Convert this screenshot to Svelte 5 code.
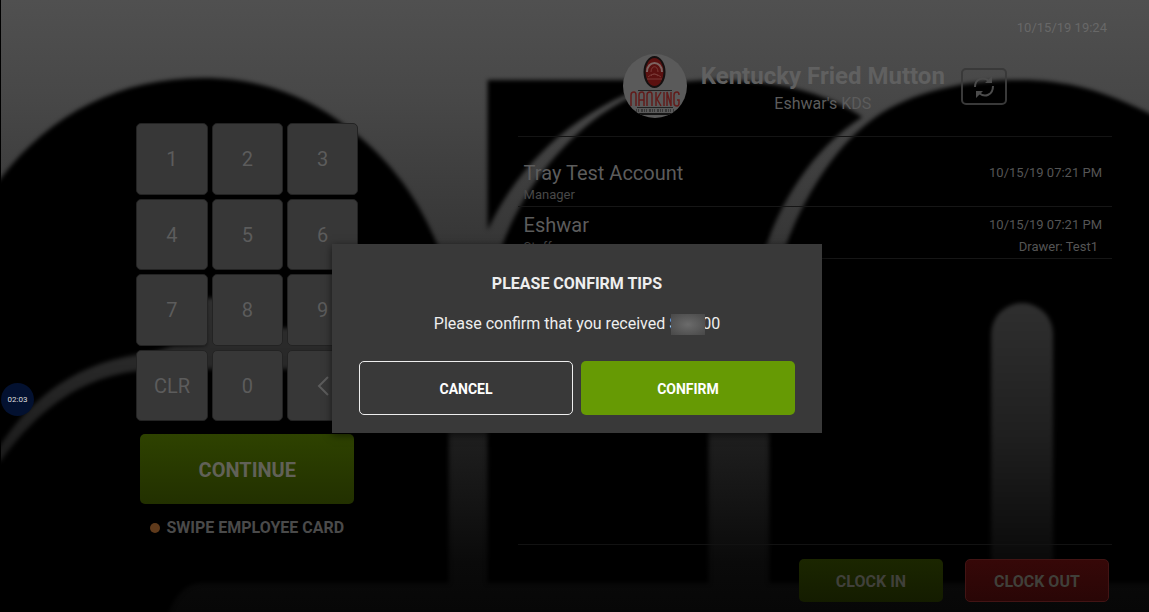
<script lang="ts">
  type Shift = {
    name: string;
    role: string;
    time: string;
    drawer?: string;
  };

  const keys = ["1", "2", "3", "4", "5", "6", "7", "8", "9", "CLR", "0", "<"];

  const shifts: Shift[] = [
    { name: "Tray Test Account", role: "Manager", time: "10/15/19 07:21 PM" },
    { name: "Eshwar", role: "Staff", time: "10/15/19 07:21 PM", drawer: "Drawer: Test1" },
  ];

  let pin = $state("");
  let confirming = $state(true);

  const press = (key: string) => {
    if (key === "CLR") pin = "";
    else if (key === "<") pin = pin.slice(0, -1);
    else pin += key;
  };
</script>

<svelte:head>
  <title>Time Clock</title>
</svelte:head>

<div class="screen">
  <svg class="backdrop" viewBox="0 0 1149 612" preserveAspectRatio="none" aria-hidden="true">
    <defs>
      <linearGradient id="fade" gradientUnits="userSpaceOnUse" x1="0" y1="0" x2="0" y2="612">
        <stop offset="0" stop-color="#505050" />
        <stop offset="0.15" stop-color="#484848" />
        <stop offset="0.4" stop-color="#363636" />
        <stop offset="0.7" stop-color="#202020" />
        <stop offset="0.92" stop-color="#0a0a0a" />
        <stop offset="1" stop-color="#070707" />
      </linearGradient>
      <filter id="soft" x="-5%" y="-5%" width="110%" height="110%" color-interpolation-filters="sRGB">
        <feGaussianBlur stdDeviation="2" />
      </filter>
    </defs>
    <rect width="1149" height="612" fill="url(#fade)" />
    <g filter="url(#soft)">
      <path d="M-20 200 L0 178 C50 113 120 78 202 78 C256 78 300 94 337 120 C384 153 415 193 436 243 C445 270 448 300 448 330 V583 H200 Q174 585 164 625 H-20Z" />
      <path d="M487 80 H665 C580 105 520 160 487 230Z" />
      <path d="M487 583 V310 C495 225 545 155 600 115 C640 88 670 80 715 80 C775 80 825 92 862 117 C810 150 780 205 767 243 C740 290 708 340 708 400 V583Z" />
      <path d="M769 583 V320 C775 270 787 240 797 218 C820 170 850 130 890 108 C930 87 975 80 1020 80 C1070 80 1110 92 1170 124 V583Z" />
      <path fill="url(#fade)" d="M-10 460 C25 400 75 360 150 353 L172 346 L205 345 V298 H215 V328 H335 V369 H170 C90 367 40 405 0 461Z" />
      <path fill="url(#fade)" d="M991 583 V334 A31 31 0 0 1 1053 334 V583Z" />
    </g>
  </svg>

  <section class="entry">
    <div class="keypad">
      {#each keys as key}
        <button class="key" aria-label={key === "<" ? "Backspace" : key} onclick={() => press(key)}>
          {#if key === "<"}
            <svg width="12" height="20" viewBox="0 0 12 20"><path d="M11 1 L2 10 L11 19" fill="none" stroke="currentColor" stroke-width="2" /></svg>
          {:else}
            {key}
          {/if}
        </button>
      {/each}
    </div>
    <button class="continue">CONTINUE</button>
    <p class="swipe"><span class="dot"></span>SWIPE EMPLOYEE CARD</p>
  </section>

  <section class="panel">
    <time class="now">10/15/19 19:24</time>

    <header>
      <svg class="logo" viewBox="0 0 64 64" role="img" aria-label="Nanking">
        <defs>
          <clipPath id="round"><circle cx="32" cy="32" r="32" /></clipPath>
        </defs>
        <g clip-path="url(#round)">
          <rect width="64" height="64" fill="#5a5a5a" />
          <ellipse cx="31.500" cy="18" rx="11" ry="16" fill="#151010" />
          <ellipse cx="31.500" cy="18" rx="9" ry="14" fill="#5b1110" />
          <path d="M24 18 C24 6 39 6 39 18" fill="none" stroke="#7d6562" stroke-width="2" />
          <path d="M28 18 C28 11 35 11 35 18 M25 23 Q31 17 38 23 M24 25 H39 M28 22 Q31 18 35 22" fill="none" stroke="#7a3a37" />
          <path d="M15 36.500 H49 M14 53.500 H50" stroke="#222" stroke-width="1" />
          <path d="M8 52 V41 Q8 38 11 38 Q13 38 13 41 V52 M16 52 V41 Q16 38 19 38 Q21 38 21 41 V52 M16 46 H21 M24 52 V41 Q24 38 27 38 Q29 38 29 41 V52 M33 38 V52 M38 38 L34 45 L38 52 M41 38 V52 M44 52 V38 L48 52 V38 M56 41 Q56 38 54 38 Q51 38 51 41 V49 Q51 52 54 52 Q56 52 56 49 V46 H54" fill="none" stroke="#621c1b" stroke-width="1.500" />
          <path d="M13 56.500 H51" stroke="#383838" stroke-width="3" stroke-dasharray="1 1 1 2 2 1" />
          <path d="M8 60 H56" stroke="#151515" stroke-width="2" />
        </g>
      </svg>
      <div class="store">
        <h1>Kentucky Fried Mutton</h1>
        <p>Eshwar's KDS</p>
      </div>
      <button class="refresh" aria-label="Refresh">
        <svg width="22" height="24" viewBox="0 0 22 24" fill="none" stroke="currentColor" stroke-width="2">
          <path d="M2 12 C2 4 10 1 16 6 M20 11 C20 20 12 23 6 18" />
          <path d="M19 1 V8 H12Z M3 23 V16 H10Z" fill="currentColor" stroke="none" />
        </svg>
      </button>
    </header>

    <ul>
      {#each shifts as shift}
        <li>
          <div>
            <strong>{shift.name}</strong>
            <small>{shift.role}</small>
          </div>
          <div class="when">
            <time>{shift.time}</time>
            {#if shift.drawer}<span>{shift.drawer}</span>{/if}
          </div>
        </li>
      {/each}
    </ul>

    <footer>
      <button class="clock in">CLOCK IN</button>
      <button class="clock out">CLOCK OUT</button>
    </footer>
  </section>

  <div class="timer">02:03</div>

  {#if confirming}
    <div class="overlay">
      <div class="dialog" role="dialog" aria-modal="true" aria-labelledby="dialog-title">
        <h2 id="dialog-title">PLEASE CONFIRM TIPS</h2>
        <p>Please confirm that you received $<span class="hidden-amount"></span>00</p>
        <div class="actions">
          <button class="cancel" onclick={() => (confirming = false)}>CANCEL</button>
          <button class="confirm" onclick={() => (confirming = false)}>CONFIRM</button>
        </div>
      </div>
    </div>
  {/if}
</div>

<style>
  :global(body) {
    margin: 0;
    background: #000;
  }

  .screen {
    position: relative;
    display: grid;
    grid-template-columns: 45fr 55fr;
    min-height: 100vh;
    box-sizing: border-box;
    border-left: 1px solid #000;
    overflow: hidden;
    font-family: Roboto, "Liberation Sans", sans-serif;
    color: #5c5c5c;
  }

  .backdrop {
    position: absolute;
    inset: 0;
    width: 100%;
    height: 100%;
  }

  h1,
  h2,
  p,
  ul {
    margin: 0;
    padding: 0;
  }

  button {
    box-sizing: border-box;
    padding: 1px 0 0;
    border: 0;
    border-radius: 5px;
    font: inherit;
    color: inherit;
    cursor: pointer;
  }

  .entry {
    position: relative;
    display: flex;
    flex-direction: column;
    align-items: center;
    padding: 123px 24px 0 0;
  }

  .keypad {
    display: grid;
    grid-template-columns: repeat(3, 1fr);
    grid-template-rows: repeat(4, 1fr);
    gap: 4px;
    width: 222px;
    height: 298px;
  }

  .key {
    display: flex;
    align-items: center;
    justify-content: center;
    border: 1px solid #232323;
    background: #373737;
    font-size: 20px;
  }

  .continue {
    width: 214px;
    height: 70px;
    margin-top: 13px;
    background: linear-gradient(#2e4200, #223000);
    font-size: 20px;
    font-weight: 700;
    color: #616158;
  }

  .swipe {
    display: flex;
    align-items: center;
    gap: 6px;
    margin-top: 14px;
    font-size: 16px;
    line-height: 20px;
    font-weight: 700;
    color: #4a4a4a;
  }

  .dot {
    width: 10px;
    height: 10px;
    border-radius: 50%;
    background: #5f3a1b;
  }

  .panel {
    position: relative;
    display: flex;
    flex-direction: column;
    padding: 20px 37px 10px 0;
  }

  .now {
    align-self: flex-end;
    margin-right: 5px;
    font-size: 13px;
    line-height: 16px;
    color: #686868;
  }

  header {
    display: flex;
    align-items: center;
    justify-content: center;
    margin-top: 18px;
    padding-bottom: 18px;
    border-bottom: 1px solid #141414;
  }

  .logo {
    width: 64px;
    height: 64px;
  }

  .store {
    margin: 0 16px 0 14px;
    padding-top: 4px;
    text-align: center;
    font-size: 16px;
    line-height: 24px;
  }

  h1 {
    font-size: 24px;
    line-height: 32px;
    color: #606060;
  }

  .refresh {
    display: flex;
    align-items: center;
    justify-content: center;
    width: 46px;
    height: 37px;
    border: 2px solid #393939;
    background: transparent;
    color: #4b4b4b;
  }

  ul {
    flex: 1;
    padding-top: 18px;
    list-style: none;
    border-bottom: 1px solid #121212;
  }

  li {
    display: flex;
    justify-content: space-between;
    height: 51px;
    padding: 0 10px 0 6px;
    border-bottom: 1px solid #161616;
  }

  li strong,
  li small {
    display: block;
  }

  li strong {
    padding-top: 5px;
    font-size: 20px;
    line-height: 26px;
    font-weight: 400;
  }

  li small {
    font-size: 13px;
    line-height: 18px;
    color: #484848;
  }

  .when {
    display: flex;
    flex-direction: column;
    gap: 6px;
    padding-top: 10px;
    font-size: 13px;
    line-height: 16px;
    color: #555;
  }

  .when span {
    align-self: flex-end;
    margin-right: 4px;
  }

  footer {
    display: flex;
    justify-content: flex-end;
    gap: 22px;
    padding: 14px 3px 0 0;
  }

  .clock {
    width: 144px;
    height: 43px;
    font-size: 16px;
    font-weight: 700;
    color: #40403a;
  }

  .in {
    background: linear-gradient(#1b2600, #141c00);
  }

  .out {
    border: 1px solid #421414;
    background: linear-gradient(#360808, #290606);
  }

  .timer {
    position: absolute;
    left: 0;
    top: 383px;
    width: 33px;
    height: 33px;
    border-radius: 50%;
    background: #031130;
    font-size: 8px;
    line-height: 33px;
    text-align: center;
    color: #ddd;
  }

  .overlay {
    position: absolute;
    inset: 0;
    display: flex;
    align-items: center;
    justify-content: center;
    padding: 65px 0 0 4px;
  }

  .dialog {
    box-sizing: border-box;
    width: 490px;
    padding: 28px 27px 18px;
    background: #393939;
    box-shadow: 0 2px 8px rgba(0, 0, 0, 0.6);
    text-align: center;
    color: #eee;
  }

  h2 {
    font-size: 16px;
    line-height: 24px;
  }

  .dialog p {
    margin-top: 16px;
    font-size: 16px;
    line-height: 24px;
  }

  .hidden-amount {
    position: relative;
    display: inline-block;
    width: 34px;
    height: 21px;
    margin: 0 -3px 0 -7px;
    vertical-align: middle;
    background: radial-gradient(#6b6b6b, #484848);
  }

  .actions {
    display: grid;
    grid-template-columns: 1fr 1fr;
    gap: 8px;
    margin-top: 25px;
  }

  .actions button {
    height: 54px;
    font-size: 14px;
    font-weight: 700;
    color: #fff;
  }

  .cancel {
    border: 1px solid #eee;
    background: transparent;
  }

  .confirm {
    background: #669a04;
  }
</style>
